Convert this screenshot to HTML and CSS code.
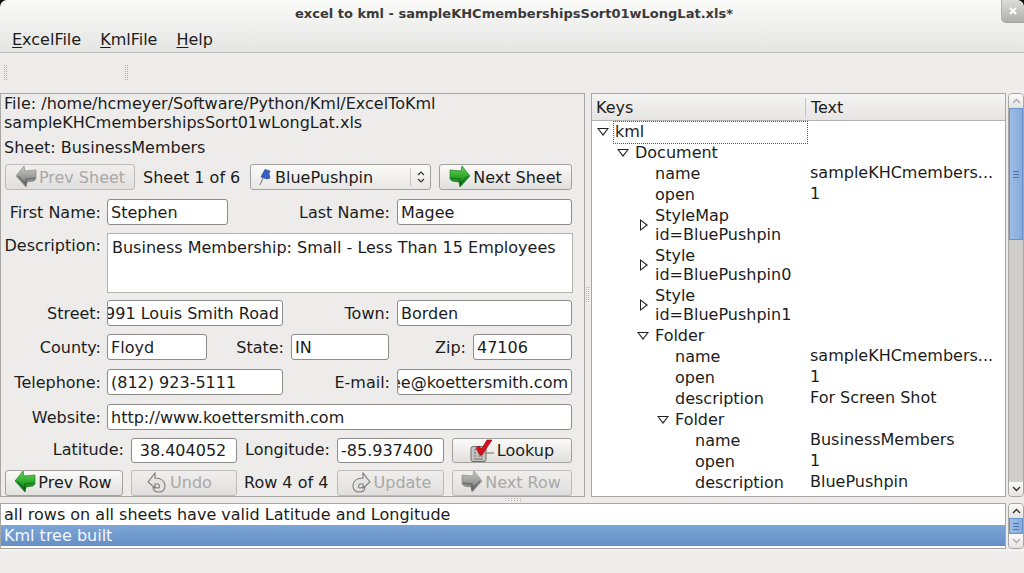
FILE: index.html
```html
<!DOCTYPE html>
<html lang="en">
<head>
    <meta charset="UTF-8">
    <title>excel to kml</title>
    <link rel="stylesheet" href="styles.css">
</head>
<body>
    <svg class="defs" width="0" height="0">
        <defs>
            <linearGradient id="greenFill" x1="0" y1="0" x2="0" y2="1">
                <stop offset="0" stop-color="#6bd653"/>
                <stop offset="0.55" stop-color="#28a62a"/>
                <stop offset="1" stop-color="#0b6f12"/>
            </linearGradient>
            <linearGradient id="greyFill" x1="0" y1="0" x2="0" y2="1">
                <stop offset="0" stop-color="#c9c9c7"/>
                <stop offset="0.55" stop-color="#999997"/>
                <stop offset="1" stop-color="#6f6f6d"/>
            </linearGradient>
            <symbol id="arrowRight" viewBox="0 0 22 22">
                <path d="M1 4 L12 5 L13 0 L21 10 L11 21 L10 16 L3 15 L1 13 Z"/>
                <path d="M2 12 L11 13 L11 18 L19 10" fill="none" stroke="#000" stroke-opacity="0.25" stroke-width="1.500"/>
            </symbol>
            <symbol id="arrowLeft" viewBox="0 0 22 22">
                <path d="M21 4 L10 5 L9 0 L1 10 L11 21 L12 16 L19 15 L21 13 Z"/>
                <path d="M20 12 L11 13 L11 18 L3 10" fill="none" stroke="#000" stroke-opacity="0.25" stroke-width="1.500"/>
            </symbol>
        </defs>
    </svg>

    <header class="titlebar">
        <span class="title">excel to kml - sampleKHCmembershipsSort01wLongLat.xls*</span>
        <span class="close">
            <svg width="8" height="8" viewBox="0 0 8 8"><path d="M1 1 L7 7 M7 1 L1 7" stroke="#fff" stroke-width="2"/></svg>
        </span>
    </header>
    <nav class="menubar">
        <span><u>E</u>xcelFile</span>
        <span><u>K</u>mlFile</span>
        <span><u>H</u>elp</span>
    </nav>
    <div class="toolbar">
        <i class="grip"></i>
        <i class="grip"></i>
    </div>

    <main class="main">
        <section class="form">
            <div class="filename">File: /home/hcmeyer/Software/Python/Kml/ExcelToKml<br>sampleKHCmembershipsSort01wLongLat.xls</div>
            <div class="sheetname">Sheet: BusinessMembers</div>

            <div class="row row-sheet">
                <button class="btn off start"><svg width="22" height="22"><use href="#arrowLeft" fill="url(#greyFill)" stroke="#808080" stroke-width="0.6"/></svg>Prev Sheet</button>
                <span class="txt">Sheet 1 of 6</span>
                <div class="select">
                    <svg width="12" height="17" viewBox="0 0 12 17">
                        <path d="M6 0.500 L11 2 L10 4.500 L11 9 L8 10 L2 8 L4 4 Z" fill="#3560c4" stroke="#1d3c85" stroke-width="0.6"/>
                        <path d="M4 9 L1 16" stroke="#8a8a8a" stroke-width="1.200"/>
                    </svg>
                    <span class="select-text">BluePushpin</span>
                    <span class="select-arrows">
                        <svg width="8" height="14" viewBox="0 0 8 14"><path d="M1 5 L4 2 L7 5 M1 9 L4 12 L7 9" fill="none" stroke="#333" stroke-width="1.200"/></svg>
                    </span>
                </div>
                <button class="btn"><svg width="22" height="22"><use href="#arrowRight" fill="url(#greenFill)" stroke="#0a6a10" stroke-width="0.6"/></svg>Next Sheet</button>
            </div>

            <div class="row row-name">
                <label>First Name:</label><input class="field" value="Stephen">
                <label>Last Name:</label><input class="field" value="Magee">
            </div>

            <div class="row row-desc">
                <label>Description:</label>
                <div class="area">Business Membership: Small - Less Than 15 Employees</div>
            </div>

            <div class="row row-street">
                <label>Street:</label><div class="field clip-left"><span>3991 Louis Smith Road</span></div>
                <label>Town:</label><input class="field" value="Borden">
            </div>

            <div class="row row-county">
                <label>County:</label><input class="field" value="Floyd">
                <label>State:</label><input class="field" value="IN">
                <label>Zip:</label><input class="field" value="47106">
            </div>

            <div class="row row-phone">
                <label>Telephone:</label><input class="field" value="(812) 923-5111">
                <label>E-mail:</label><div class="field clip-left"><span>smagee@koettersmith.com</span></div>
            </div>

            <div class="row row-web">
                <label>Website:</label><input class="field" value="http://www.koettersmith.com">
            </div>

            <div class="row row-geo">
                <label>Latitude:</label><input class="field center" value="38.404052">
                <label>Longitude:</label><input class="field" value="-85.937400">
                <button class="btn end">
                    <svg class="icon-lookup" width="25" height="23" viewBox="0 0 25 23">
                        <rect x="1" y="7.500" width="15" height="15" rx="2" fill="#c4c4c2" stroke="#6f6f6d"/>
                        <path d="M4 11h2M8 11h5M4 14h2M8 14h5M4 17h2M8 17h5M4 20h9M15 14h9" stroke="#6f6f6d"/>
                        <path d="M6 9 L9 7 L11.500 10 L17 1 L22 1 L12 16 L10 16 Z" fill="#d9101e" stroke="#7c050c" stroke-width="0.6"/>
                    </svg>Lookup</button>
            </div>

            <div class="row row-nav">
                <button class="btn start"><svg width="22" height="22"><use href="#arrowLeft" fill="url(#greenFill)" stroke="#0a6a10" stroke-width="0.6"/></svg>Prev Row</button>
                <button class="btn off undo">
                    <svg width="22" height="21" viewBox="0 0 22 21"><path d="M2 10 L9 1 L9 6 C15 6 19 9 19 14 C19 18 16 20 13 20 C9 20 7 18 7 15 L12 16 C14 16 14 13 12 12 L9 12 L9 16 Z" fill="#e2e2e0" stroke="#7a7a78" stroke-width="1.100"/></svg>Undo</button>
                <span class="txt pad">Row 4 of 4</span>
                <button class="btn off">
                    <svg width="22" height="21" viewBox="0 0 22 21"><path d="M20 10 L13 1 L13 6 C7 6 3 9 3 14 C3 18 6 20 9 20 C13 20 15 18 15 15 L10 16 C8 16 8 13 10 12 L13 12 L13 16 Z" fill="#e2e2e0" stroke="#7a7a78" stroke-width="1.100"/></svg>Update</button>
                <button class="btn off end"><svg width="22" height="22"><use href="#arrowRight" fill="url(#greyFill)" stroke="#808080" stroke-width="0.6"/></svg>Next Row</button>
            </div>
        </section>

        <div class="vsplit"><i class="dots-v"></i></div>

        <section class="tree">
            <div class="tree-head">
                <span class="col-keys">Keys</span>
                <span class="col-text">Text</span>
            </div>
            <div class="node d0 focus"><b class="open"></b><span class="key">kml</span></div>
            <div class="node d1"><b class="open"></b><span class="key">Document</span></div>
            <div class="node d2"><span class="key">name</span><span class="val">sampleKHCmembers...</span></div>
            <div class="node d2"><span class="key">open</span><span class="val">1</span></div>
            <div class="node d2 tall"><b class="shut"></b><span class="key">StyleMap<br>id=BluePushpin</span></div>
            <div class="node d2 tall"><b class="shut"></b><span class="key">Style<br>id=BluePushpin0</span></div>
            <div class="node d2 tall"><b class="shut"></b><span class="key">Style<br>id=BluePushpin1</span></div>
            <div class="node d2"><b class="open"></b><span class="key">Folder</span></div>
            <div class="node d3"><span class="key">name</span><span class="val">sampleKHCmembers...</span></div>
            <div class="node d3"><span class="key">open</span><span class="val">1</span></div>
            <div class="node d3"><span class="key">description</span><span class="val">For Screen Shot</span></div>
            <div class="node d3"><b class="open"></b><span class="key">Folder</span></div>
            <div class="node d4"><span class="key">name</span><span class="val">BusinessMembers</span></div>
            <div class="node d4"><span class="key">open</span><span class="val">1</span></div>
            <div class="node d4"><span class="key">description</span><span class="val">BluePushpin</span></div>
        </section>

        <div class="scroll">
            <span class="sb-btn"><svg width="9" height="6" viewBox="0 0 9 6"><path d="M1 5 L4.500 1.500 L8 5" fill="none" stroke="#aaa" stroke-width="1.400"/></svg></span>
            <span class="sb-thumb sb-thumb-big"><i class="lines"></i></span>
            <span class="sb-trough"></span>
            <span class="sb-btn"><svg width="9" height="6" viewBox="0 0 9 6"><path d="M1 1 L4.500 4.500 L8 1" fill="none" stroke="#333" stroke-width="1.400"/></svg></span>
        </div>
    </main>

    <div class="hsplit"><i class="dots-h"></i></div>

    <div class="logwrap">
        <section class="log">
            <div class="log-row">all rows on all sheets have valid Latitude and Longitude</div>
            <div class="log-row selected">Kml tree built</div>
        </section>
        <div class="scroll scroll-small">
            <span class="sb-btn"><svg width="9" height="6" viewBox="0 0 9 6"><path d="M1 5 L4.500 1.500 L8 5" fill="none" stroke="#333" stroke-width="1.400"/></svg></span>
            <span class="sb-thumb"><i class="lines"></i></span>
            <span class="sb-btn"><svg width="9" height="6" viewBox="0 0 9 6"><path d="M1 1 L4.500 4.500 L8 1" fill="none" stroke="#aaa" stroke-width="1.400"/></svg></span>
        </div>
    </div>
    <div class="statusbar"></div>
</body>
</html>
```

FILE: styles.css
```css
* {
    box-sizing: border-box;
}

html, body {
    margin: 0;
    padding: 0;
    height: 573px;
    overflow: hidden;
}

/* the dark strip only shows behind the rounded window corners */
body {
    font-family: "DejaVu Sans", sans-serif;
    font-size: 16px;
    color: #1c1c1c;
    background: linear-gradient(#111 0 8px, #edecea 8px);
}

.defs {
    position: absolute;
}

/* title + menu share one gradient */
.titlebar {
    height: 26px;
    background: linear-gradient(#fafaf9, #efefee);
    border-radius: 7px 7px 0 0;
    display: flex;
    justify-content: center;
    align-items: center;
    padding-left: 4px;
    position: relative;
}

.title {
    font-size: 13px;
    font-weight: bold;
    color: #3a3a3a;
}

.close {
    position: absolute;
    right: 0;
    top: 0;
    width: 23px;
    height: 23px;
    background: linear-gradient(#dcdcda, #aeaeac);
    border-left: 1px solid #b0b0ae;
    border-bottom: 1px solid #a0a09e;
    border-radius: 0 9px 0 5px;
    display: flex;
    align-items: center;
    justify-content: center;
}

.menubar {
    height: 27px;
    padding-left: 12px;
    display: flex;
    gap: 19px;
    align-items: center;
    background: linear-gradient(#efefee, #e5e5e3);
    border-bottom: 1px solid #bdbbb7;
}

.menubar u {
    text-underline-offset: 2px;
}

.toolbar {
    height: 40px;
    display: flex;
    align-items: center;
    padding-left: 4px;
    gap: 117px;
}

.grip {
    width: 4px;
    height: 16px;
    background-image: conic-gradient(at 1px 1px, transparent 75%, #b0aea9 0);
    background-size: 2px 2px;
}

.main {
    height: 404px;
    display: flex;
}

/* left form */
.form {
    width: 585px;
    border: 1px solid #a9a7a3;
    padding: 0 0 0 4px;
    display: flex;
    flex-direction: column;
}

.filename {
    line-height: 19px;
    margin-left: -1px;
}

.sheetname {
    line-height: 19px;
    margin: 6px 0 7px -1px;
}

.row {
    display: grid;
    align-items: stretch;
    width: 568px;
}

label, .txt {
    display: flex;
    align-items: center;
    justify-content: flex-end;
    padding-right: 6px;
    white-space: nowrap;
}

.row-sheet {
    grid-template-columns: 138px 107px 189px 133px;
    height: 26px;
}

.row-sheet .txt {
    justify-content: flex-start;
}

.row-sheet .btn.start {
    width: 130px;
}

.row-name {
    grid-template-columns: 102px 121px 169px 175px;
    height: 26px;
    margin-top: 9px;
}

.row-name label:nth-of-type(2),
.row-street label:nth-of-type(2),
.row-county label:nth-of-type(n+2),
.row-phone label:nth-of-type(2) {
    padding-right: 7px;
}

.row-desc {
    grid-template-columns: 102px 466px;
    height: 60px;
    margin-top: 8px;
}

.row-desc label {
    align-items: flex-start;
    padding-top: 3px;
}

.row-street {
    grid-template-columns: 102px 176px 114px 175px;
    height: 26px;
    margin-top: 7px;
}

.row-county {
    grid-template-columns: 102px 100px 84px 98px 84px 99px;
    height: 26px;
    margin-top: 8px;
}

.row-phone {
    grid-template-columns: 102px 176px 114px 175px;
    height: 26px;
    margin-top: 9px;
}

.row-web {
    grid-template-columns: 102px 465px;
    height: 26px;
    margin-top: 9px;
}

.row-geo {
    grid-template-columns: 126px 106px 100px 107px 128px;
    height: 24px;
    margin-top: 8px;
}

.row-geo label {
    padding: 0 7px 2px 0;
}

.row-nav {
    grid-template-columns: 126px 106px 100px 107px 128px;
    height: 23px;
    margin-top: 8px;
}

.row-nav .btn {
    padding-bottom: 2px;
}

.row-nav .btn.start, .row-nav .btn.end {
    padding-right: 2px;
}

.txt.pad {
    justify-content: flex-start;
    padding: 0 0 2px 7px;
}

.field {
    font: inherit;
    color: #1c1c1c;
    height: 100%;
    width: 100%;
    padding: 0 3px;
    background-color: #fff;
    border: 1px solid #8e8c88;
    border-radius: 3px;
    outline: none;
    display: flex;
    align-items: center;
    min-width: 0;
}

.field.center {
    text-align: center;
    padding-right: 5px;
}

.clip-left {
    overflow: hidden;
    justify-content: flex-end;
    white-space: nowrap;
}

.clip-left span {
    flex-shrink: 0;
}

.area {
    background-color: #fff;
    border: 1px solid #b5b3af;
    padding: 4px 4px;
}

.btn {
    font: inherit;
    color: #1c1c1c;
    padding: 0;
    display: flex;
    align-items: center;
    justify-content: center;
    gap: 2px;
    border: 1px solid #a3a19d;
    border-radius: 3px;
    background: linear-gradient(#fafaf9, #e1e0de);
    white-space: nowrap;
}

.btn.off {
    color: #a9a8a6;
    border-color: #bdbbb8;
    background: linear-gradient(#f0efee, #e0dfdd);
}

.row-nav .btn.undo {
    padding-right: 10px;
}

.btn.end {
    justify-self: end;
    width: 120px;
}

.btn.start {
    justify-self: start;
    width: 118px;
}

.icon-lookup {
    overflow: visible;
}

.select {
    background: linear-gradient(#fafaf9, #e8e7e5);
    border: 1px solid #a3a19d;
    border-radius: 3px;
    width: 181px;
    display: flex;
    align-items: center;
    padding-left: 8px;
    gap: 4px;
}

.select-text {
    flex: 1;
}

.select-arrows {
    width: 20px;
    height: 18px;
    border-left: 1px solid #c9c7c3;
    display: flex;
    align-items: center;
    justify-content: center;
}

/* splitters */
.vsplit {
    width: 6px;
    display: flex;
    align-items: center;
    justify-content: center;
}

.dots-v {
    width: 4px;
    height: 16px;
    background-image: conic-gradient(at 1px 1px, transparent 75%, #b5b3ae 0);
    background-size: 2px 2px;
}

.hsplit {
    height: 6px;
    display: flex;
    align-items: center;
    justify-content: center;
    padding-left: 1px;
}

.dots-h {
    width: 16px;
    height: 4px;
    background-image: conic-gradient(at 1px 1px, transparent 75%, #b5b3ae 0);
    background-size: 3px 2px;
}

/* tree */
.tree {
    width: 415px;
    border: 1px solid #a9a7a3;
    background-color: #fff;
    overflow: hidden;
}

.tree-head {
    height: 27px;
    display: flex;
    align-items: center;
    background: linear-gradient(#f4f4f3, #e6e5e3);
    border-bottom: 1px solid #b5b3af;
}

.col-keys {
    width: 214px;
    padding-left: 4px;
    border-right: 1px solid #c4c2be;
}

.col-text {
    padding-left: 5px;
}

.node {
    height: 21px;
    line-height: 21px;
    display: flex;
    position: relative;
    white-space: nowrap;
}

.node.tall {
    height: 40px;
    line-height: 19px;
    padding-top: 1px;
}

.key {
    display: block;
}

.val {
    position: absolute;
    left: 218px;
    top: -1px;
}

.d0 .key { margin-left: 23px; }
.d1 .key { margin-left: 43px; }
.d2 .key { margin-left: 63px; }
.d3 .key { margin-left: 83px; }
.d4 .key { margin-left: 103px; }

.node.focus::after {
    content: "";
    position: absolute;
    left: 21px;
    top: 0;
    width: 193px;
    height: 21px;
    border: 1px dotted #555;
}

.open, .shut {
    position: absolute;
}

.open {
    top: 7px;
    width: 12px;
    height: 8px;
    background-color: #222;
    clip-path: polygon(0 0, 100% 0, 50% 100%);
}

.open::after, .shut::after {
    content: "";
    position: absolute;
    background-color: #fff;
}

.open::after {
    left: 2px;
    top: 1px;
    width: 8px;
    height: 5px;
    clip-path: polygon(0 0, 100% 0, 50% 100%);
}

.shut {
    top: 14px;
    width: 8px;
    height: 12px;
    background-color: #222;
    clip-path: polygon(0 0, 100% 50%, 0 100%);
}

.shut::after {
    left: 1px;
    top: 2px;
    width: 5px;
    height: 8px;
    clip-path: polygon(0 0, 100% 50%, 0 100%);
}

.d0 .open { left: 5px; }
.d1 .open { left: 25px; }
.d2 .open { left: 45px; }
.d3 .open { left: 65px; }
.d2 .shut { left: 48px; }

/* scrollbars */
.scroll {
    width: 16px;
    margin-left: 2px;
    display: flex;
    flex-direction: column;
    background-color: #cfcdc9;
    border: 1px solid #a9a7a3;
    border-radius: 4px;
    overflow: hidden;
}

.sb-btn {
    height: 14px;
    background: linear-gradient(#fbfbfa, #e4e3e1);
    display: flex;
    align-items: center;
    justify-content: center;
    flex-shrink: 0;
}

.sb-thumb {
    background: linear-gradient(90deg, #9dbde6, #86abdc);
    border: 1px solid #6c93c9;
    height: 16px;
    display: flex;
    align-items: center;
    justify-content: center;
    flex-shrink: 0;
}

.sb-thumb-big {
    height: 132px;
}

.sb-trough {
    flex: 1;
}

.lines {
    width: 6px;
    height: 7px;
    background: repeating-linear-gradient(#4f78b0 0 1px, transparent 1px 3px);
}

/* log */
.logwrap {
    height: 46px;
    display: flex;
}

.log {
    width: 1006px;
    border: 1px solid #a9a7a3;
    background-color: #fff;
}

.log-row {
    height: 21px;
    line-height: 21px;
    padding-left: 3px;
}

.log-row.selected {
    color: #f4f7fb;
    background: linear-gradient(#7ca5d8, #658fc4);
}

.scroll-small {
    height: 46px;
}

.statusbar {
    margin-top: 1px;
    border-top: 1px solid #f7f7f6;
    height: 23px;
}
```
